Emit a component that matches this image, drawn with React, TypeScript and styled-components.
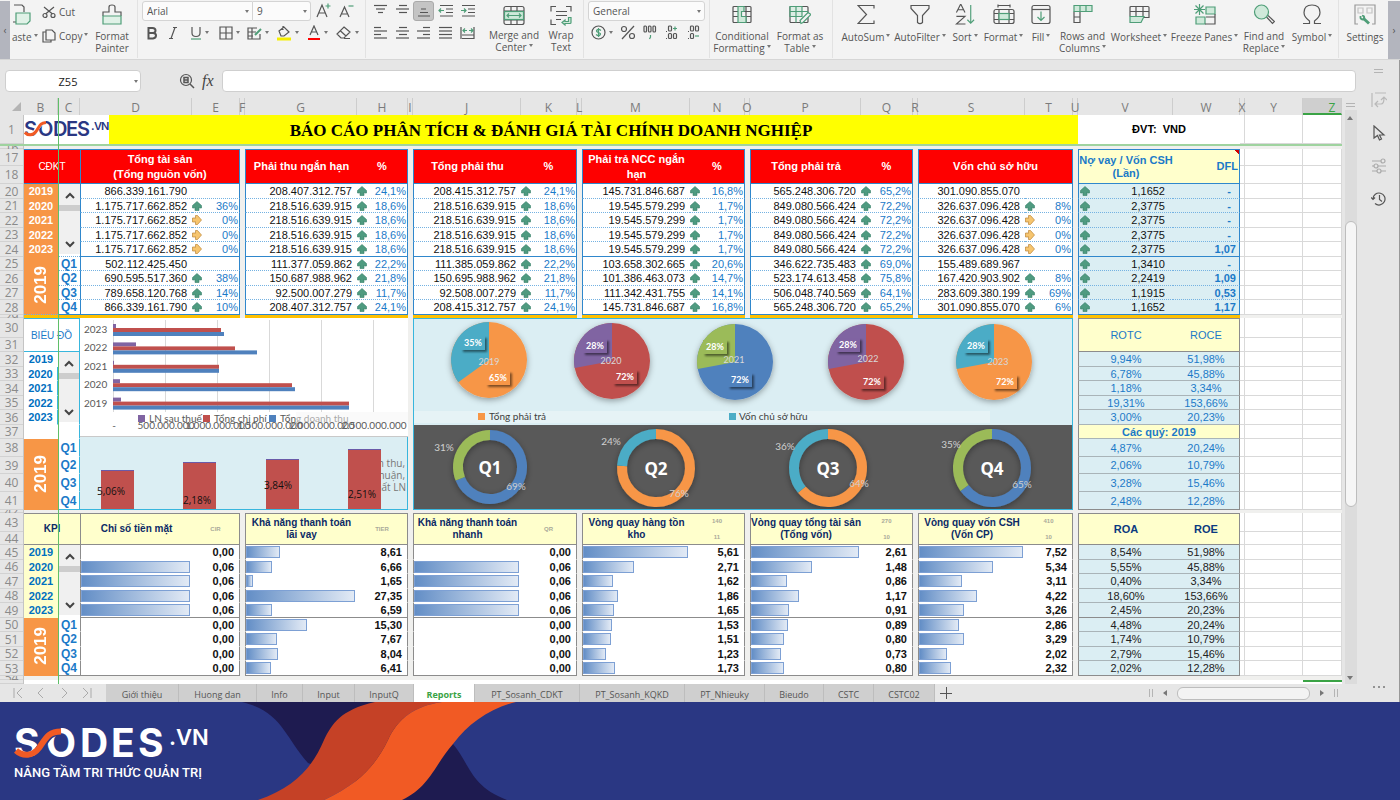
import React from "react";
import styled, { createGlobalStyle, css } from "styled-components";

const Global = createGlobalStyle`
  * { box-sizing: border-box; }
  body { margin: 0; background: #fff; font-family: "Open Sans", "Noto Sans", sans-serif; }
  button, input, select { font-family: inherit; color: inherit; }
  button { padding: 0; border: 0; background: none; }
`;

const ink = "#555";
const green = "#4f9e78";
const blue = "#1b7ac8";
const navy = "#2a3783";
const sheetFont = `"Liberation Sans", Arial, sans-serif`;

/* ---------- Ribbon ---------- */

const Page = styled.div`
  display: flex;
  flex-direction: column;
  min-height: 100vh;
  overflow: hidden;
`;
const Ribbon = styled.header`
  display: flex;
  height: 60px;
  background: #f3f3f3;
  border-bottom: 1px solid #d6d6d6;
  color: ${ink};
  font-size: 10px;
  overflow: hidden;
`;
const EdgeButton = styled.button`
  flex: 0 0 auto;
  width: ${(p: { $w: number }) => p.$w}px;
  height: 58px;
  margin-top: 1px;
  background: #b3b5be;
  font-size: 10px;
`;
const Divider = styled.div`
  flex: 0 0 1px;
  height: 58px;
  background: #e2e2e2;
`;
const Group = styled.div<{ $pad?: string }>`
  display: flex;
  flex: 0 0 auto;
  padding: ${(p) => p.$pad || "0"};
`;
const BigButton = styled.button<{ $w: number; $gap?: number }>`
  flex: 0 0 auto;
  width: ${(p) => p.$w}px;
  display: flex;
  flex-direction: column;
  align-items: center;
  padding-top: 4px;
  font-size: 10px;
  line-height: 12px;
  white-space: nowrap;
  svg { flex: none; height: 21px; margin-bottom: ${(p) => p.$gap ?? 5}px; }
`;
const Caret = styled.i`
  display: inline-block;
  margin: 0 0 5px 2px;
  border: 2px solid transparent;
  border-top: 3px solid #777;
  border-bottom: 0;
  vertical-align: middle;
`;
const Spacer = styled.div`
  flex: 1 1 0;
`;
const PasteButton = styled(BigButton)`
  overflow: hidden;
  align-items: flex-start;
  padding-left: 2px;
`;
const Stack = styled.div<{ $w: number }>`
  flex: 0 0 auto;
  width: ${(p) => p.$w}px;
  display: flex;
  flex-direction: column;
`;
const SmallLabelButton = styled.button`
  display: flex;
  align-items: center;
  gap: 3px;
  height: 24px;
  font-size: 10px;
  white-space: nowrap;
`;
const Line = styled.div<{ $h: number }>`
  display: flex;
  align-items: center;
  height: ${(p) => p.$h}px;
`;
const Field = styled.label<{ $w: number; $left?: boolean; $right?: boolean }>`
  position: relative;
  display: flex;
  align-items: center;
  flex: 0 0 auto;
  width: ${(p) => p.$w}px;
  height: 20px;
  background: #fbfbfb;
  border: 1px solid #d4d4d4;
  border-radius: ${(p) => (p.$left ? "3px 0 0 3px" : p.$right ? "0 3px 3px 0" : "3px")};
  ${(p) => p.$right && "border-left: 0;"}
  select {
    appearance: none;
    flex: 1;
    width: 100%;
    height: 18px;
    padding: 0 4px;
    border: 0;
    background: none;
    font-size: 10px;
  }
  i { position: absolute; right: 3px; top: 8px; margin: 0; }
`;
const IconButton = styled.button<{ $w: number; $on?: boolean }>`
  flex: 0 0 auto;
  width: ${(p) => p.$w}px;
  height: 20px;
  display: flex;
  align-items: center;
  justify-content: center;
  border-radius: 3px;
  ${(p) => p.$on && "background: #c4c4c4; border: 1px solid #aaa;"}
  i { margin: 0 0 0 3px; }
`;

const G = ({ w = 20, h = 20, children, vb }: any) => (
  <svg width={w} height={h} viewBox={vb || `0 0 ${w} ${h}`} fill="none" stroke={ink} strokeWidth="1.2">
    {children}
  </svg>
);
const T = ({ label, caret }: { label: string; caret?: boolean }) => (
  <span>
    {label}
    {caret && <Caret />}
  </span>
);

const icons: Record<string, React.ReactNode> = {
  painter: (
    <G w={20} h={21}>
      <path d="M1 12V8h6V3q0-2 3-2t3 2v5h6v4" />
      <path d="M1 12h18v8H1z" fill="#e0f1e7" stroke={green} />
    </G>
  ),
  paste: (
    <G w={20} h={21}>
      <path d="M2 1h8l2 2v5M1 18h3" />
      <path d="M4 9h14v8l-3 3H4z" fill="#e0f1e7" stroke={green} />
    </G>
  ),
  cut: (
    <G w={14} h={14}>
      <path d="M2 2l8.500 7M12 2L3.500 9" />
      <circle cx="3" cy="10.500" r="2" />
      <circle cx="11" cy="10.500" r="2" />
    </G>
  ),
  copy: (
    <G w={14} h={14}>
      <path d="M3.500 3H1v10h8v-2M4 1h6l3 3v7H4z" />
    </G>
  ),
  merge: (
    <G w={22} h={20}>
      <rect x="1" y="1" width="20" height="18" rx="2" />
      <path d="M1 5.500h20M1 14.500h20M8 1v4.500M14 1v4.500M8 14.500V19M14 14.500V19" />
      <rect x="1.500" y="6" width="19" height="8" fill="#cfe9da" stroke={green} />
      <path d="M4 10h14M6 8l-2 2 2 2M16 8l2 2-2 2" stroke={green} />
    </G>
  ),
  wrap: (
    <G w={22} h={20}>
      <path d="M6 1H1v5M16 1h5v5M6 19H1v-5M6 6h11M6 10h11M6 14h5" />
      <path d="M18.500 12h2.500v5q0 1-1 1h-5v1.500L12 17l3-2.500V16h3.500z" stroke={green} fill="#cfe9da" />
    </G>
  ),
  cond: (
    <G w={20} h={20}>
      <rect x="1" y="2" width="18" height="16" rx="1" />
      <path d="M1 7h18M1 12h18M14 2v16" />
      <path d="M6 2h6v5H9.500v5H14v6H6z" fill="#cfe9da" stroke={green} />
    </G>
  ),
  table: (
    <G w={22} h={20}>
      <rect x="1" y="2" width="18" height="16" rx="1" />
      <path d="M1 2h12v10H1zM1 7h18M7 2v16M13 2v10M1 12h10" fill="#cfe9da" fillOpacity=".6" stroke={green} />
      <path d="M12 19l-1-3 8-8 3 2-8 8z" fill="#f3f3f3" stroke={green} />
    </G>
  ),
  sum: (
    <G w={18} h={20}>
      <path d="M17 4V1H1l8.500 9L1 19h16v-3" />
    </G>
  ),
  filter: (
    <G w={20} h={20}>
      <path d="M1 1h18v3l-6.500 7v7q-2.500 2.500-5 0v-7L1 4z" />
    </G>
  ),
  sort: (
    <G w={20} h={22}>
      <path d="M1 9L5.500 0 10 9M2.500 6h6M1 13h9l-9 8h9.500" />
      <path d="M16 1v19M12.500 16.500L16 20l3.500-3.500" stroke={green} />
    </G>
  ),
  format: (
    <G w={22} h={20}>
      <path d="M5 1h12M5 0v3M17 0v3" />
      <rect x="1" y="5" width="20" height="14" rx="2" />
      <path d="M1 9h20M1 15h20M6 5v14M16 5v14" />
      <rect x="6" y="9" width="10" height="6" fill="#cfe9da" stroke={green} />
    </G>
  ),
  fill: (
    <G w={20} h={20}>
      <rect x="1" y="1" width="18" height="18" rx="2" />
      <path d="M1 5h18" />
      <path d="M10 7v9M6.500 12.500L10 16l3.500-3.500" stroke={green} />
    </G>
  ),
  rows: (
    <G w={20} h={20}>
      <path d="M1 7v11h6V7M1 12.500h6" />
      <path d="M1 1h18v6H1zM7 1v6M13 1v6" fill="#cfe9da" stroke={green} />
    </G>
  ),
  worksheet: (
    <G w={21} h={20}>
      <path d="M1 12V3q0-1 1-1h17q1 0 1 1v10h-5M1 7h19M7 2v10M14 2v10M1 12h13" />
      <path d="M1 12h14l-3 6H1z" fill="#cfe9da" stroke={green} />
    </G>
  ),
  freeze: (
    <G w={22} h={21}>
      <path d="M5.500 0v11M0 5.500h11M1.500 1.500l8 8M9.500 1.500l-8 8" stroke={green} />
      <path d="M12 3h9v7h-9zM2 13v7h9v-7z" fill="#cfe9da" stroke={green} />
      <path d="M12 13h9v7H11M21 10v4" />
    </G>
  ),
  find: (
    <G w={22} h={21}>
      <path d="M13.500 13l6 6.500 2-2-6.500-6" />
      <circle cx="8.500" cy="8" r="7" fill="#cfe9da" stroke={green} />
    </G>
  ),
  symbol: (
    <G w={20} h={21}>
      <path d="M1 19.500h6.500V17Q2 13 2 8.500 2 1 10 1t8 7.500q0 4.500-5.500 8.500v2.500H19" />
    </G>
  ),
  settings: (
    <G w={22} h={21}>
      <path d="M4 20H1V1h20v19h-3" stroke="#999" />
      <path d="M4 4h5v5H4zM13 4h5v5h-5z" stroke="#c4c4c4" />
      <path d="M9 14l6 5.500" stroke={green} strokeWidth="3" />
      <path d="M6.500 12v2q1 2 3 1.500 1.500-2 0-3.500L8 11.500" stroke={green} strokeWidth="1.800" />
    </G>
  ),
};

const hLines = (rows: [number, number][]) => (
  <G w={16} h={14}>
    {rows.map(([x, w], i) => (
      <path key={i} d={`M${x} ${1.5 + i * 3.5}h${w}`} />
    ))}
  </G>
);

const RibbonBar = () => (
  <Ribbon>
    <EdgeButton $w={10} aria-label="Scroll ribbon left">‹</EdgeButton>
    <Group>
      <PasteButton $w={32} $gap={6}>
        {icons.paste}
        <T label="aste" caret />
      </PasteButton>
      <Stack $w={48}>
        <SmallLabelButton>{icons.cut}<T label="Cut" /></SmallLabelButton>
        <SmallLabelButton>{icons.copy}<T label="Copy" caret /></SmallLabelButton>
      </Stack>
      <BigButton $w={44}>
        {icons.painter}
        <T label="Format" /><T label="Painter" />
      </BigButton>
    </Group>
    <Group $pad="0 0 0 3px"><Divider /></Group>
    <Group $pad="1px 0 0 4px">
      <Stack $w={223}>
        <Line $h={20}>
          <Field $w={111} $left>
            <select aria-label="Font"><option>Arial</option></select><Caret />
          </Field>
          <Field $w={58} $right>
            <select aria-label="Font size"><option>9</option></select><Caret />
          </Field>
          <IconButton $w={24} aria-label="Increase font">
            <G w={16} h={16}><path d="M2 14L7 2l5 12M4 10h6" /><path d="M10.500 3h5M13 .5v5" stroke={green} /></G>
          </IconButton>
          <IconButton $w={22} aria-label="Decrease font">
            <G w={16} h={16}><path d="M2 14L6.500 4 11 14M4 11h5" /><path d="M10.500 3h5" stroke={green} /></G>
          </IconButton>
        </Line>
        <Line $h={23}>
          <IconButton $w={20} aria-label="Bold"><G w={12} h={14}><path strokeWidth="2" d="M2.500 2h4q3 0 3 2.500t-3 2.500h-4zM2.500 7h4.500q3 0 3 2.500T7 12.500H2.500z" /></G></IconButton>
          <IconButton $w={22} aria-label="Italic"><G w={10} h={14}><path d="M5 1.500h4M1 12.500h4M7 1.500l-4 11" /></G></IconButton>
          <IconButton $w={30} aria-label="Underline"><G w={12} h={14}><path d="M2 1v6q0 3.500 4 3.500T10 7V1" /><path d="M1 13h10" stroke={green} /></G><Caret /></IconButton>
          <IconButton $w={30} aria-label="Borders"><G w={14} h={14}><path d="M1 1h12v12H1zM7 1v12M1 7h12" /></G><Caret /></IconButton>
          <IconButton $w={28} aria-label="Draw border"><G w={15} h={14}><path d="M13 8v5H1V2h9M1 6h8M1 10h5M5 2v11" /><path d="M14 3L8 9" stroke={green} strokeWidth="2" /></G><Caret /></IconButton>
          <IconButton $w={31} aria-label="Fill color"><G w={16} h={16}><path d="M3 6l5-4 5 5-5 4H5zM7 1v4" /><path d="M1 14h14" stroke="#f5ee00" strokeWidth="3" /></G><Caret /></IconButton>
          <IconButton $w={28} aria-label="Font color"><G w={14} h={16}><path d="M3 10L7 1l4 9M4.500 7h5" /><path d="M1 14h12" stroke="red" strokeWidth="2" /></G><Caret /></IconButton>
          <IconButton $w={32} aria-label="Clear"><G w={16} h={14}><path d="M8 1l6 5-6 6H5L1 8zM4 4.500l6 5.500M8 12.500h6" /></G><Caret /></IconButton>
        </Line>
      </Stack>
    </Group>
    <Divider />
    <Group $pad="1px 0 0 4px">
      <Stack $w={119}>
        <Line $h={20}>
          <IconButton $w={22} aria-label="Top">{hLines([[1, 13], [3, 9], [5, 5]])}</IconButton>
          <IconButton $w={21} aria-label="Middle">{hLines([[4, 8], [1, 13], [4, 8]])}</IconButton>
          <IconButton $w={21} $on aria-label="Bottom"><G w={16} h={14}><path d="M5 5h5M4 8.500h8M2 12h12" /></G></IconButton>
          <IconButton $w={24} aria-label="Decrease indent"><G w={16} h={14}><path d="M2 1.500h13M8 5h7M8 8.500h7M2 12h13" /><path d="M1 6.500h5M3 4.500l-2 2 2 2" stroke={green} /></G></IconButton>
          <IconButton $w={20} aria-label="Increase indent"><G w={16} h={14}><path d="M2 1.500h13M8 5h7M8 8.500h7M2 12h13" /><path d="M1 6.500h5M4 4.500l2 2-2 2" stroke={green} /></G></IconButton>
        </Line>
        <Line $h={23}>
          <IconButton $w={22} aria-label="Left">{hLines([[1, 7], [1, 13], [1, 7], [1, 13]])}</IconButton>
          <IconButton $w={21} aria-label="Center">{hLines([[4, 8], [1, 13], [4, 8], [1, 13]])}</IconButton>
          <IconButton $w={21} aria-label="Right">{hLines([[7, 7], [1, 13], [7, 7], [1, 13]])}</IconButton>
          <IconButton $w={24} aria-label="Justify">{hLines([[1, 13], [1, 13], [1, 13], [1, 13]])}</IconButton>
          <IconButton $w={20} aria-label="Distribute"><G w={16} h={14}><path d="M1 1v12M14 1v12M2 9h12M2 12.500h12" /><path d="M3 4.500h4M9 4.500h4M5 2.500l-2 2 2 2M11 2.500l2 2-2 2" stroke={green} /></G></IconButton>
        </Line>
      </Stack>
      <BigButton $w={50} $gap={3}>{icons.merge}<T label="Merge and" /><T label="Center" caret /></BigButton>
      <BigButton $w={44} $gap={3}>{icons.wrap}<T label="Wrap" /><T label="Text" /></BigButton>
    </Group>
    <Divider />
    <Group $pad="1px 0 0 4px">
      <Stack $w={121}>
        <Line $h={20}>
          <Field $w={117}>
            <select aria-label="Number format"><option>General</option></select><Caret />
          </Field>
        </Line>
        <Line $h={23}>
          <IconButton $w={27} aria-label="Currency"><G w={15} h={15}><circle cx="7.500" cy="7.500" r="6.500" /><path d="M10 5.500Q7.500 3.500 6 5t1.500 2.500T9 10 5 9.500M7.500 3v9" stroke={green} /></G><Caret /></IconButton>
          <IconButton $w={25} aria-label="Percent"><G w={16} h={15}><path d="M14 1L2 14" /><circle cx="4" cy="4" r="2.500" /><circle cx="12" cy="11" r="2.500" /></G></IconButton>
          <IconButton $w={20} aria-label="Thousands"><G w={14} h={15}><rect x="1" y="1" width="2.500" height="6" rx="1" /><rect x="5.500" y="1" width="2.500" height="6" rx="1" /><rect x="10" y="1" width="2.500" height="6" rx="1" /><path d="M7.500 10v2l-1 2" stroke={green} /></G></IconButton>
          <IconButton $w={23} aria-label="Add decimal"><G w={13} h={15}><rect x="3.500" y="1" width="3" height="5" rx="1" /><path d="M1 6.500h1M1 13.500h1" /><rect x="3.500" y="8.500" width="3" height="5" rx="1" /><rect x="8.500" y="8.500" width="3" height="5" rx="1" /><path d="M8 3.500h4M10 1.500v4" stroke={green} /></G></IconButton>
          <IconButton $w={21} aria-label="Remove decimal"><G w={13} h={15}><rect x="3.500" y="1" width="3" height="5" rx="1" /><rect x="8.500" y="1" width="3" height="5" rx="1" /><path d="M1 6.500h1M1 13.500h1" /><rect x="3.500" y="8.500" width="3" height="5" rx="1" /><path d="M8 11h4" stroke={green} /></G></IconButton>
        </Line>
      </Stack>
    </Group>
    <Divider />
    <Group $pad="0 3px">
      <BigButton $w={58}>{icons.cond}<T label="Conditional" /><T label="Formatting" caret /></BigButton>
      <BigButton $w={58}>{icons.table}<T label="Format as" /><T label="Table" caret /></BigButton>
    </Group>
    <Divider />
    <Group $pad="0 4px 0 6px">
      <BigButton $w={54} $gap={6}>{icons.sum}<T label="AutoSum" caret /></BigButton>
      <BigButton $w={54} $gap={6}>{icons.filter}<T label="AutoFilter" caret /></BigButton>
      <BigButton $w={36} $gap={6}>{icons.sort}<T label="Sort" caret /></BigButton>
      <BigButton $w={41} $gap={6}>{icons.format}<T label="Format" caret /></BigButton>
      <BigButton $w={34} $gap={6}>{icons.fill}<T label="Fill" caret /></BigButton>
      <BigButton $w={49}>{icons.rows}<T label="Rows and" /><T label="Columns" caret /></BigButton>
      <BigButton $w={64} $gap={6}>{icons.worksheet}<T label="Worksheet" caret /></BigButton>
      <BigButton $w={67} $gap={6}>{icons.freeze}<T label="Freeze Panes" caret /></BigButton>
      <BigButton $w={52}>{icons.find}<T label="Find and" /><T label="Replace" caret /></BigButton>
      <BigButton $w={44} $gap={6}>{icons.symbol}<T label="Symbol" caret /></BigButton>
    </Group>
    <Divider />
    <Group $pad="0 0 0 5px">
      <BigButton $w={42} $gap={6}>{icons.settings}<T label="Settings" /></BigButton>
    </Group>
    <Spacer />
    <EdgeButton $w={12} aria-label="Scroll ribbon right">›</EdgeButton>
  </Ribbon>
);

/* ---------- Workspace ---------- */

const Workspace = styled.div`
  display: flex;
  background: #e6e6e6;
`;
const Main = styled.main`
  flex: 1 1 0;
  min-width: 0;
`;
const FormulaBar = styled.div`
  display: flex;
  align-items: center;
  height: 38px;
  padding: 4px 2px 0 5px;
`;
const NameBox = styled.label`
  position: relative;
  width: 136px;
  height: 22px;
  input {
    display: block;
    width: 100%;
    height: 22px;
    padding: 0 10px 0 0;
    border: 1px solid #cfcfcf;
    border-radius: 4px;
    text-align: center;
    font-size: 11px;
    color: #222;
  }
  i { position: absolute; right: 3px; top: 10px; margin: 0; }
`;
const FormulaTools = styled.div`
  display: flex;
  align-items: center;
  gap: 7px;
  width: 81px;
  padding-left: 38px;
`;
const FxButton = styled.button`
  font: italic 16px/20px "Liberation Serif", "Noto Sans", serif;
  color: #444;
`;
const FormulaInput = styled.input`
  flex: 1;
  height: 22px;
  border: 1px solid #cfcfcf;
  border-radius: 4px;
`;
const SidePanel = styled.aside`
  flex: 0 0 42px;
  display: flex;
  flex-direction: column;
  align-items: center;
  padding: 9px 0 0;
  gap: 14px;
  border-right: 1px solid #999;
  button { height: 19px; }
  button:last-child { margin-top: auto; }
`;

const SheetRow = styled.div`
  display: flex;
`;
const Sheet = styled.div`
  position: relative;
  flex: 1 1 0;
  min-width: 0;
  background: #f0f0ee;
  font-family: ${sheetFont};
`;
const Band = styled.div<{ $h?: number; $bg?: string }>`
  display: grid;
  grid-template-columns: 24px minmax(0, 1fr);
  ${(p) => p.$h && `height: ${p.$h}px;`}
  background: ${(p) => p.$bg || "none"};
`;
const ColumnHeads = styled.div`
  display: grid;
  grid-template-columns:
    34fr 22fr 112fr 48fr 5px 112fr 51fr 5px 108fr 56fr 5px 108fr 55fr 5px
    111fr 52fr 5px 107fr 48fr 5px 95fr 67fr 5px 58fr 39fr;
`;
const ColumnHead = styled.div<{ $on?: boolean }>`
  display: flex;
  justify-content: center;
  min-width: 0;
  height: 17px;
  padding-top: 2px;
  border-right: 1px solid #cdcdcd;
  font: 12px/15px "Open Sans", "Noto Sans", sans-serif;
  color: #7b7b7b;
  ${(p) => p.$on && "background: #cfcfcf; color: #3aa345; border-bottom: 2px solid #3aa345; padding-left: 20px;"}
`;
const Corner = styled.div`
  display: flex;
  justify-content: flex-end;
  align-items: flex-end;
  padding: 0 3px 4px 0;
`;
const Blocks = styled.div`
  display: grid;
  grid-template-columns:
    56fr 160fr 5px 163fr 5px 164fr 5px 163fr 5px 163fr 5px 155fr 5px 162fr 5px 97fr;
  min-width: 0;
`;
const Block = styled.div<{ $c: string; $bg?: string }>`
  grid-column: ${(p) => p.$c};
  min-width: 0;
  background: ${(p) => p.$bg || "none"};
`;
const RowHeads = styled.div`
  background: #e6e6e6;
  border-right: 1px solid #c4c4c4;
`;
const RowHead = styled.div<{ $h: number }>`
  height: ${(p) => p.$h}px;
  line-height: ${(p) => p.$h}px;
  font-family: "Open Sans", "Noto Sans", sans-serif;
  font-size: 12px;
  text-align: center;
  color: #8a8a8a;
  ${(p) => p.$h < 10 && "overflow: hidden;"}
  box-shadow: inset 0 -1px #d2d2d2;
`;
const Filler = styled.div`
  grid-column: 15 / 17;
  background: #fff;
  display: grid;
  grid-template-columns: 5px 58fr 39fr;
  align-content: start;
`;
const FillCell = styled.div<{ $h: number }>`
  height: ${(p) => p.$h}px;
  border-right: 1px solid #d9d9d9;
  border-bottom: 1px solid #d9d9d9;
`;
const SelectedEdge = styled.div`
  grid-column: 16;
  width: 40%;
  height: 4px;
  margin-left: auto;
  border-top: 2px solid #3aa345;
`;
const FreezeV = styled.div`
  position: absolute;
  top: 0;
  bottom: 0;
  left: calc(24px + (100% - 59px) * 34 / 1283);
  width: 1px;
  background: #5fbf68;
`;
const FreezeH = styled.div`
  height: 2px;
  background: #9fd39f;
`;

const Title = styled.h1`
  position: relative;
  grid-column: 1 / 14;
  height: 29px;
  margin: 0;
  background: #ff0;
  color: #000;
  font: bold 17px/31px "Liberation Serif", "Times New Roman", serif;
  text-align: center;
  svg { position: absolute; left: 0; top: 0; background: #fff; }
`;
const Unit = styled.div`
  grid-column: 14;
  background: #fff;
  font: bold 11px/29px ${sheetFont};
  text-align: center;
  white-space: pre;
`;

const RightFill = ({ rows }: { rows: number[] }) => (
  <Filler>
    {rows.map((h, i) => (
      <React.Fragment key={i}>
        <FillCell $h={h} /><FillCell $h={h} /><FillCell $h={h} />
      </React.Fragment>
    ))}
  </Filler>
);
const Heads = ({ rows }: { rows: [string, number][] }) => (
  <RowHeads>
    {rows.map(([n, h]) => <RowHead key={n} $h={h}>{n}</RowHead>)}
  </RowHeads>
);

/* ---------- Data tables ---------- */

const rowH = (i: number) => (i % 2 ? 14 : 15);

const DataTable = styled.table<{ $line: string; $edge: string }>`
  width: 100%;
  table-layout: fixed;
  border-collapse: separate;
  border-spacing: 0;
  background: #fff;
  font: 11px/12px ${sheetFont};
  color: #111;
  td, th { padding: 0; white-space: nowrap; }
  td { border-bottom: 1px ${(p) => p.$line}; }
  tr.solid td, tr:last-child td { border-bottom: 1px solid ${(p) => p.$edge}; }
  thead th { border-bottom: 1px solid ${(p) => p.$edge}; border-top: 1px solid ${(p) => p.$edge}; }
  td:last-child, th:last-child { border-right: 1px solid ${(p) => p.$edge}; }
  th.first, td.first { border-left: 1px solid ${(p) => p.$edge}; }
`;
const Row = styled.tr<{ $h: number }>`
  height: ${(p) => p.$h}px;
`;
const HeadCell = styled.th<{ $tone: "red" | "cream" | "kpi" | "plain"; $light?: boolean }>`
  line-height: 15px;
  font-size: 11px;
  white-space: pre-line !important;
  ${(p) =>
    p.$tone === "red"
      ? css`background: #fe0000; color: #fff;`
      : p.$tone === "cream"
      ? css`background: #ffffcc; color: #0b2a66; line-height: 13px;`
      : p.$tone === "kpi"
      ? css`background: #ffffcc; color: #0b2a66; font-size: 10px; line-height: 12px; white-space: pre !important;`
      : css`background: #fff; color: ${blue};`}
  ${(p) => p.$light && "font-size: 10px; font-weight: normal;"}
`;
const Num = styled.td<{ $pad?: number }>`
  text-align: right;
  padding-right: ${(p) => p.$pad || 5}px !important;
`;
const Pct = styled.td`
  color: ${blue};
  div { display: flex; justify-content: space-between; align-items: center; padding: 0 1px 0 0; }
  svg { display: block; }
`;
const Year = styled.td<{ $bg: string; $fg: string }>`
  background: ${(p) => p.$bg};
  color: ${(p) => p.$fg};
  font-weight: bold;
  text-align: center;
  border-bottom-color: transparent !important;
`;
const Quarter = styled.td`
  color: ${blue};
  font-size: 12px;
  font-weight: bold;
  text-align: center;
  border-bottom: 1px solid #d9d9d9;
`;
const YearSpan = styled.td`
  background: #f79646;
  color: #fff;
  font-size: 17px;
  font-weight: bold;
  text-align: center;
  span { display: inline-block; writing-mode: vertical-rl; transform: rotate(180deg); line-height: 20px; }
`;
const ScrollCell = styled.td`
  background: #fff;
  vertical-align: top;
  div {
    display: flex;
    flex-direction: column;
    justify-content: space-between;
    align-items: center;
    width: calc(100% - 1px);
    height: 70px;
    margin-left: 1px;
    padding: 7px 0 5px;
    background: linear-gradient(#cdcdcd, #cdcdcd) 0 21px / 100% 6px no-repeat #f0f0f0;
  }
  button { height: 10px; line-height: 0; }
`;

const Up = () => (
  <svg width="10" height="10" viewBox="0 0 10 10"><path d="M5 .5L9.500 4.500V7H7.500L7 6.500V9.500H3V6.500L2.500 7H.5V4.500z" fill="#4f9b80" stroke="#38806a" strokeWidth=".6" /></svg>
);
const Flat = () => (
  <svg width="10" height="10" viewBox="0 0 10 10"><path d="M9.500 5L5.500 9.500H3.500V7.500L4 7H.5V3H4L3.500 2.500V.5H5.500z" fill="#f6c56f" stroke="#bb8536" strokeWidth=".7" /></svg>
);
const Scroller = ({ label }: { label: string }) => (
  <ScrollCell rowSpan={5}>
    <div>
      <button aria-label={`${label} previous`}><svg width="10" height="10" viewBox="0 0 10 10" fill="none" stroke="#444" strokeWidth="2"><path d="M1 7l4-4 4 4" /></svg></button>
      <button aria-label={`${label} next`}><svg width="10" height="10" viewBox="0 0 10 10" fill="none" stroke="#444" strokeWidth="2"><path d="M1 3l4 4 4-4" /></svg></button>
    </div>
  </ScrollCell>
);

const years = ["2019", "2020", "2021", "2022", "2023"];
const quarters = ["Q1", "Q2", "Q3", "Q4"];

type Cell = [string, string];
const mark = (p: string) => (p === "0%" ? <Flat /> : p ? <Up /> : null);
const zip = (v: string, p: string): Cell[] => {
  const ps = p.split("|");
  return v.split("|").map((x, i) => [x, ps[i]]);
};
const assets = zip(
  "866.339.161.790|1.175.717.662.852|1.175.717.662.852|1.175.717.662.852|1.175.717.662.852|502.112.425.450|690.595.517.360|789.658.120.768|866.339.161.790",
  "|36%|0%|0%|0%||38%|14%|10%"
);
const balance: { title: string; pct?: boolean; c: string; w: [number, number]; rows: Cell[] }[] = [
  {
    title: "Phải thu ngắn hạn", pct: true, c: "4", w: [112, 51],
    rows: zip(
      "208.407.312.757|218.516.639.915|218.516.639.915|218.516.639.915|218.516.639.915|111.377.059.862|150.687.988.962|92.500.007.279|208.407.312.757",
      "24,1%|18,6%|18,6%|18,6%|18,6%|22,2%|21,8%|11,7%|24,1%"
    ),
  },
  {
    title: "Tổng phải thu", pct: true, c: "6", w: [108, 56],
    rows: zip(
      "208.415.312.757|218.516.639.915|218.516.639.915|218.516.639.915|218.516.639.915|111.385.059.862|150.695.988.962|92.508.007.279|208.415.312.757",
      "24,1%|18,6%|18,6%|18,6%|18,6%|22,2%|21,8%|11,7%|24,1%"
    ),
  },
  {
    title: "Phải trả NCC ngắn\nhạn", pct: true, c: "8", w: [108, 55],
    rows: zip(
      "145.731.846.687|19.545.579.299|19.545.579.299|19.545.579.299|19.545.579.299|103.658.302.665|101.386.463.073|111.342.431.755|145.731.846.687",
      "16,8%|1,7%|1,7%|1,7%|1,7%|20,6%|14,7%|14,1%|16,8%"
    ),
  },
  {
    title: "Tổng phải trả", pct: true, c: "10", w: [111, 52],
    rows: zip(
      "565.248.306.720|849.080.566.424|849.080.566.424|849.080.566.424|849.080.566.424|346.622.735.483|523.174.613.458|506.048.740.569|565.248.306.720",
      "65,2%|72,2%|72,2%|72,2%|72,2%|69,0%|75,8%|64,1%|65,2%"
    ),
  },
  {
    title: "Vốn chủ sở hữu", c: "12", w: [107, 48],
    rows: zip(
      "301.090.855.070|326.637.096.428|326.637.096.428|326.637.096.428|326.637.096.428|155.489.689.967|167.420.903.902|283.609.380.199|301.090.855.070",
      "|8%|0%|0%|0%||8%|69%|6%"
    ),
  },
];
const leverage = zip(
  "1,1652|2,3775|2,3775|2,3775|2,3775|1,3410|2,2419|1,1915|1,1652",
  "-|-|-|-|1,07|-|1,09|0,53|1,17"
);

const Cols = ({ w }: { w: number[] }) => (
  <colgroup>{w.map((x, i) => <col key={i} width={x} />)}</colgroup>
);
const PctCell = ({ v }: { v: string }) => (
  <Pct>
    <div><span>{mark(v)}</span><span>{v}</span></div>
  </Pct>
);
const blueTable = { $line: "dotted #74b2e2", $edge: "#2f87cc" };
const grayTable = { $line: "solid transparent", $edge: "#8c8c8c" };
const ratioTable = { $line: "solid #a9b4b8", $edge: "#8c8c8c" };

const SideCells = ({ i, bg, fg, label }: { i: number; bg: string; fg: string; label: string }) => (
  <>
    {i < 5 && <Year $bg={bg} $fg={fg}>{years[i]}</Year>}
    {i === 0 && <Scroller label={label} />}
    {i === 5 && <YearSpan rowSpan={4}><span>2019</span></YearSpan>}
    {i >= 5 && <Quarter>{quarters[i - 5]}</Quarter>}
  </>
);

const LeverageTable = styled(DataTable)`
  td { background: #dbeef3; }
  thead th { color: ${blue}; }
  td:first-child svg { display: block; margin-top: 1px; }
`;
const LevCell = styled.div`
  display: flex;
  justify-content: space-between;
  padding: 0 8px 0 1px;
`;
const Dfl = styled(Num)`
  color: ${blue};
  font-weight: bold;
`;
const NoteCell = styled(HeadCell)`
  text-align: right;
  padding-right: 1px !important;
  color: ${blue} !important;
  background: linear-gradient(225deg, #d00000 3px, transparent 3px) #ffffcc;
`;

const r9: number[] = Array.from({ length: 9 }, (_, i) => rowH(i));

const BalanceSection = () => (
  <Band>
    <Heads rows={[["17", 17], ["18", 18], ...r9.map((h, i): [string, number] => [String(20 + i), h])]} />
    <Blocks>
      <Block $c="1 / 3">
        <DataTable {...blueTable}>
          <Cols w={[34, 22, 112, 48]} />
          <thead>
            <Row $h={35}>
              <HeadCell $tone="red" $light colSpan={2}>CĐKT</HeadCell>
              <HeadCell $tone="red" className="first" colSpan={2}>{"Tổng tài sản\n(Tổng nguồn vốn)"}</HeadCell>
            </Row>
          </thead>
          <tbody>
            {assets.map(([v, p], i) => (
              <Row key={i} $h={rowH(i)} className={i === 4 ? "solid" : ""}>
                <SideCells i={i} bg="#f79646" fg="#fff" label="Balance" />
                <Num className="first">{v}</Num>
                <PctCell v={p} />
              </Row>
            ))}
          </tbody>
        </DataTable>
      </Block>
      {balance.map((b) => (
        <Block key={b.c} $c={b.c}>
          <DataTable {...blueTable}>
            <Cols w={b.w} />
            <thead>
              <Row $h={35}>
                <HeadCell $tone="red" className="first" colSpan={b.pct ? 1 : 2}>{b.title}</HeadCell>
                {b.pct && <HeadCell $tone="red">%</HeadCell>}
              </Row>
            </thead>
            <tbody>
              {b.rows.map(([v, p], i) => (
                <Row key={i} $h={rowH(i)} className={i === 4 ? "solid" : ""}>
                  <Num className="first">{v}</Num>
                  <PctCell v={p} />
                </Row>
              ))}
            </tbody>
          </DataTable>
        </Block>
      ))}
      <Block $c="14">
        <LeverageTable {...blueTable}>
          <Cols w={[95, 67]} />
          <thead>
            <Row $h={35}>
              <HeadCell $tone="cream" className="first">{"Nợ vay / Vốn CSH\n(Lần)"}</HeadCell>
              <NoteCell $tone="cream">DFL</NoteCell>
            </Row>
          </thead>
          <tbody>
            {leverage.map(([v, d], i) => (
              <Row key={i} $h={rowH(i)} className={i === 4 ? "solid" : ""}>
                <td className="first"><LevCell><Up />{v}</LevCell></td>
                <Dfl $pad={d === "-" ? 8 : 3}>{d}</Dfl>
              </Row>
            ))}
          </tbody>
        </LeverageTable>
      </Block>
      <RightFill rows={[17, 18, ...r9]} />
    </Blocks>
  </Band>
);

/* ---------- Charts ---------- */

const ChartSvg = styled.svg`
  display: block;
  width: 100%;
  font-family: Lato, "Noto Sans", sans-serif;
`;
const hbars: [string, number, number, number][] = [
  ["2023", 3, 108, 111],
  ["2022", 23, 122, 144],
  ["2021", 1, 106, 106],
  ["2020", 7, 179, 182],
  ["2019", 8, 236, 236],
];
const axis = ["-", "500.000.000", "1.000.000.000", "1.500.000.000", "2.000.000.000", "2.500.000.000"];

const RevenueChart = () => (
  <ChartSvg viewBox="0 0 328 119" height="119">
    <rect width="328" height="119" fill="#fff" />
    {axis.map((_, i) => <path key={i} d={`M${33.5 + i * 52} 2v92`} stroke="#d9d9d9" />)}
    {hbars.map(([y, a, b, c], i) => {
      const t = 6 + i * 18.4;
      return (
        <g key={y}>
          <text x="4" y={t + 9} fontSize="10" fill="#595959">{y}</text>
          <rect x="33" y={t} width={a} height="4" fill="#8064a2" />
          <rect x="33" y={t + 4} width={b} height="4" fill="#c0504d" />
          <rect x="33" y={t + 8} width={c} height="4" fill="#4f81bd" />
        </g>
      );
    })}
    <g fontSize="10" fill="#595959">
      <rect x="58" y="97" width="7" height="7" fill="#8064a2" /><text x="69" y="104">LN sau thuế</text>
      <rect x="123" y="97" width="7" height="7" fill="#c0504d" /><text x="134" y="104">Tổng chi phí</text>
      <rect x="189" y="97" width="7" height="7" fill="#4f81bd" /><text x="200" y="104">Tổng doanh thu</text>
      <rect x="216" y="94" width="112" height="12" fill="#f6f6f6" opacity=".5" />
      {axis.map((t, i) => <text key={t} x={34 + i * 52} y="111" textAnchor="middle">{t}</text>)}
    </g>
    <path d="M0 118.500h328" stroke="#c9c9c9" />
  </ChartSvg>
);

const columns: [number, number, string, number, number][] = [
  [21, 33, "5,06%", 17, 58],
  [103, 25, "2,18%", 103, 67],
  [186, 22, "3,84%", 184, 52],
  [268, 12, "2,51%", 268, 61],
];
const MarginChart = () => (
  <ChartSvg viewBox="0 0 328 73" height="73">
    <rect width="328" height="73" fill="#dbeef3" />
    <g fontSize="10" fill="#777" fontFamily="Open Sans, Noto Sans, sans-serif" textAnchor="end">
      <text x="325" y="30">h thu,</text>
      <text x="325" y="42">huận,</text>
      <text x="326" y="54">hất LN</text>
    </g>
    {columns.map(([x, y, label, tx, ty]) => (
      <g key={x}>
        <rect x={x} y={y} width="33" height={73 - y} fill="#c0504d" />
        <rect x={x} y={y} width="33" height="1" fill="#6a5aa8" />
        <text x={tx} y={ty} fontSize="10" fill="#111" fontFamily="Open Sans, Noto Sans, sans-serif">{label}</text>
      </g>
    ))}
    <path d="M0 72.500h328M327.500 0v73" stroke="#38b6dd" />
  </ChartSvg>
);

const arc = (cx: number, cy: number, r: number, a: number, b: number) => {
  const pt = (f: number) => [cx + r * Math.sin(f * 2 * Math.PI), cy - r * Math.cos(f * 2 * Math.PI)];
  const [x1, y1] = pt(a);
  const [x2, y2] = pt(b);
  return `M${x1} ${y1}A${r} ${r} 0 ${b - a > 0.5 ? 1 : 0} 1 ${x2} ${y2}`;
};
type Pie = { y: string; cx: number; cy: number; big: number; a: string; b: string; l1: [number, number]; l2: [number, number]; t: [number, number] };
const pies: Pie[] = [
  { y: "2019", cx: 76, cy: 42, big: 65, a: "#f79646", b: "#4bacc6", l1: [60, 25], l2: [85, 60], t: [76, 44] },
  { y: "2020", cx: 199, cy: 43, big: 72, a: "#c0504d", b: "#8064a2", l1: [182, 28], l2: [212, 59], t: [198, 43] },
  { y: "2021", cx: 322, cy: 44, big: 72, a: "#4f81bd", b: "#9bbb59", l1: [302, 29], l2: [327, 62], t: [321, 42] },
  { y: "2022", cx: 453, cy: 44, big: 72, a: "#c0504d", b: "#8064a2", l1: [435, 27], l2: [459, 64], t: [455, 41] },
  { y: "2023", cx: 581, cy: 44, big: 72, a: "#f79646", b: "#4bacc6", l1: [563, 28], l2: [592, 64], t: [585, 44] },
];
const donuts: { q: string; cx: number; cy: number; r: number; big: number; a: string; b: string; l1: [number, number]; l2: [number, number] }[] = [
  { q: "Q1", cx: 77, cy: 149, r: 37, big: 69, a: "#4f81bd", b: "#9bbb59", l1: [31, 129], l2: [103, 168] },
  { q: "Q2", cx: 243, cy: 150, r: 39, big: 76, a: "#f79646", b: "#4bacc6", l1: [198, 123], l2: [266, 175] },
  { q: "Q3", cx: 415, cy: 150, r: 39, big: 64, a: "#f79646", b: "#4bacc6", l1: [372, 128], l2: [446, 165] },
  { q: "Q4", cx: 579, cy: 150, r: 39, big: 65, a: "#4f81bd", b: "#9bbb59", l1: [538, 126], l2: [609, 166] },
];

const PieBoard = () => (
  <ChartSvg viewBox="0 0 660 192" height="192" textAnchor="middle">
    <defs>
      <filter id="soft" x="-30%" y="-30%" width="160%" height="160%">
        <feDropShadow dx="0" dy="2" stdDeviation="3" floodColor="#000" floodOpacity=".35" />
      </filter>
      <filter id="tag" x="-30%" y="-30%" width="170%" height="190%">
        <feDropShadow dx="2" dy="2" stdDeviation="1" floodColor="#000" floodOpacity=".5" />
      </filter>
    </defs>
    <rect width="660" height="107" fill="#dbeef3" />
    <rect y="93" width="577" height="12" fill="#e6f3f6" />
    <rect y="107" width="660" height="85" fill="#595959" />
    {pies.map((p) => (
      <g key={p.y}>
        <circle cx={p.cx} cy={p.cy} r="38" fill={p.a} filter="url(#soft)" />
        <path d={`${arc(p.cx, p.cy, 38, p.big / 100, 1)}L${p.cx} ${p.cy}Z`} fill={p.b} />
        <rect x={p.l1[0] - 12} y={p.l1[1] - 7} width="24" height="14" fill={p.b} filter="url(#tag)" />
        <rect x={p.l2[0] - 12} y={p.l2[1] - 7} width="24" height="14" fill={p.a} filter="url(#tag)" />
        <g fontSize="9" fontWeight="bold" fill="#fff">
          <text x={p.l1[0]} y={p.l1[1] + 3}>{100 - p.big}%</text>
          <text x={p.l2[0]} y={p.l2[1] + 3}>{p.big}%</text>
        </g>
        <text x={p.t[0]} y={p.t[1] + 3} fontSize="9" fill="#d9d9d9">{p.y}</text>
      </g>
    ))}
    <g fontSize="10" fill="#404040" textAnchor="start">
      <rect x="65" y="95" width="7" height="7" fill="#f79646" /><text x="76" y="102">Tổng phải trả</text>
      <rect x="316" y="95" width="7" height="7" fill="#4bacc6" /><text x="326" y="102">Vốn chủ sở hữu</text>
    </g>
    {donuts.map((d) => (
      <g key={d.q}>
        <g fill="none" strokeWidth="10" filter="url(#soft)">
          <path d={arc(d.cx, d.cy, d.r - 5, 0, d.big / 100)} stroke={d.a} />
          <path d={arc(d.cx, d.cy, d.r - 5, d.big / 100, 0.9999)} stroke={d.b} />
        </g>
        <text x={d.cx} y={d.cy + 7} fontSize="17" fontWeight="bold" fill="#fff" fontFamily="Noto Sans, sans-serif">{d.q}</text>
        <g fontSize="10" fill="#d0d0d0">
          <text x={d.l1[0]} y={d.l1[1] + 4}>{100 - d.big}%</text>
          <text x={d.l2[0]} y={d.l2[1] + 4}>{d.big}%</text>
        </g>
      </g>
    ))}
    <rect x=".5" y=".5" width="659" height="191" fill="none" stroke="#38b6dd" />
  </ChartSvg>
);

const RatioTable = styled(DataTable)`
  color: ${blue};
  text-align: center;
  td { background: #dbeef3; }
  thead th { color: ${blue}; font-weight: normal; }
  td[colspan] { background: #ffffcc; font-weight: bold; }
`;
const DarkRatioTable = styled(RatioTable)`
  color: #222;
  thead th { font-weight: bold; color: #0b3a80; }
`;
const rotc: Cell[] = zip("9,94%|6,78%|1,18%|19,31%|3,00%", "51,98%|45,88%|3,34%|153,66%|20,23%");
const rotcQ: Cell[] = zip("4,87%|2,06%|3,28%|2,48%", "20,24%|10,79%|15,46%|12,28%");
const qH = [18, 17, 18, 18];

const ChartSection = () => {
  const rows: [string, number][] = [["30", 20], ["31", 14], ["32", 15], ["33", 14], ["34", 15], ["35", 14], ["36", 15], ["37", 14], ["38", 18], ["39", 17], ["40", 18], ["41", 18]];
  return (
    <Band>
      <Heads rows={rows} />
      <Blocks>
        <Block $c="1">
          <DataTable $line="solid transparent" $edge="#38b6dd">
            <Cols w={[34, 22]} />
            <thead><Row $h={34}><HeadCell $tone="plain" $light colSpan={2}>BIỂU ĐỒ</HeadCell></Row></thead>
            <tbody>
              {years.map((y, i) => (
                <Row key={y} $h={rowH(i)}>
                  <Year $bg="#fff" $fg="#0070c0">{y}</Year>
                  {i === 0 && <Scroller label="Chart" />}
                </Row>
              ))}
              <Row $h={14}><td /><td /></Row>
              {quarters.map((q, i) => (
                <Row key={q} $h={qH[i]}>
                  {i === 0 && <YearSpan rowSpan={4}><span>2019</span></YearSpan>}
                  <Quarter>{q}</Quarter>
                </Row>
              ))}
            </tbody>
          </DataTable>
        </Block>
        <Block $c="2 / 5"><RevenueChart /><MarginChart /></Block>
        <Block $c="6 / 13"><PieBoard /></Block>
        <Block $c="14">
          <RatioTable {...ratioTable}>
            <Cols w={[95, 67]} />
            <thead><Row $h={34}><HeadCell $tone="cream" className="first">ROTC</HeadCell><HeadCell $tone="cream">ROCE</HeadCell></Row></thead>
            <tbody>
              {rotc.map(([a, b], i) => <Row key={a} $h={rowH(i)}><td className="first">{a}</td><td>{b}</td></Row>)}
              <Row $h={14}><td className="first" colSpan={2}>Các quý: 2019</td></Row>
              {rotcQ.map(([a, b], i) => <Row key={a} $h={qH[i]}><td className="first">{a}</td><td>{b}</td></Row>)}
            </tbody>
          </RatioTable>
        </Block>
        <RightFill rows={rows.map((r) => r[1])} />
      </Blocks>
    </Band>
  );
};

/* ---------- KPI section ---------- */

const Bar = styled.div`
  height: 12px;
  border: 1px solid #7da0d4;
  background: linear-gradient(90deg, #638ec6, #e2eaf5);
`;
const KpiValue = styled(Num)`
  font-weight: bold;
`;
const Code = styled.div`
  display: flex;
  flex-direction: column;
  gap: 4px;
  font: bold 6px/12px ${sheetFont};
  color: #a9a99a;
`;

const kpis: { title: string; code: string[]; c: string; w: [number, number]; max: number; v: string }[] = [
  { title: "Khả năng thanh toán\nlãi vay", code: ["TIER"], c: "4", w: [112, 51], max: 27.35, v: "8,61|6,66|1,65|27,35|6,59|15,30|7,67|8,04|6,41" },
  { title: "Khả năng thanh toán\nnhanh", code: ["QR"], c: "6", w: [108, 56], max: 0.06, v: "0,00|0,06|0,06|0,06|0,06|0,00|0,00|0,00|0,00" },
  { title: "Vòng quay hàng tồn\nkho", code: ["140", "11"], c: "8", w: [108, 55], max: 5.61, v: "5,61|2,71|1,62|1,86|1,65|1,53|1,51|1,23|1,73" },
  { title: "Vòng quay tổng tài sản\n(Tổng vốn)", code: ["270", "10"], c: "10", w: [111, 52], max: 2.61, v: "2,61|1,48|0,86|1,17|0,91|0,89|0,80|0,73|0,80" },
  { title: "Vòng quay vốn CSH\n(Vốn CP)", code: ["410", "10"], c: "12", w: [107, 48], max: 7.52, v: "7,52|5,34|3,11|4,22|3,26|2,86|3,29|2,02|2,32" },
];
const cash = "0,00|0,06|0,06|0,06|0,06|0,00|0,00|0,00|0,00".split("|");
const roa = zip("8,54%|5,55%|0,40%|18,60%|2,45%|4,48%|1,74%|2,79%|2,02%", "51,98%|45,88%|3,34%|153,66%|20,23%|20,24%|10,79%|15,46%|12,28%");

const KpiCells = ({ v, max }: { v: string; max: number }) => {
  const n = parseFloat(v.replace(",", "."));
  return (
    <>
      <td className="first">{n > 0 && <Bar style={{ width: `${(n / max) * 98}%` }} />}</td>
      <KpiValue>{v}</KpiValue>
    </>
  );
};

const KpiSection = () => (
  <Band>
    <Heads rows={[["43", 19], ["44", 13], ...r9.map((h, i): [string, number] => [String(45 + i), h])]} />
    <Blocks>
      <Block $c="1 / 3">
        <DataTable {...grayTable}>
          <Cols w={[34, 22, 112, 48]} />
          <thead>
            <Row $h={32}>
              <HeadCell $tone="kpi" colSpan={2}>KPI</HeadCell>
              <HeadCell $tone="kpi" className="first">Chỉ số tiền mặt</HeadCell>
              <HeadCell $tone="kpi"><Code><span>CIR</span></Code></HeadCell>
            </Row>
          </thead>
          <tbody>
            {cash.map((v, i) => (
              <Row key={i} $h={rowH(i)} className={i === 4 ? "solid" : ""}>
                <SideCells i={i} bg="#ffffcc" fg="#0070c0" label="KPI" />
                <KpiCells v={v} max={0.06} />
              </Row>
            ))}
          </tbody>
        </DataTable>
      </Block>
      {kpis.map((k) => (
        <Block key={k.c} $c={k.c}>
          <DataTable {...grayTable}>
            <Cols w={k.w} />
            <thead>
              <Row $h={32}>
                <HeadCell $tone="kpi" className="first">{k.title}</HeadCell>
                <HeadCell $tone="kpi"><Code>{k.code.map((c) => <span key={c}>{c}</span>)}</Code></HeadCell>
              </Row>
            </thead>
            <tbody>
              {k.v.split("|").map((v, i) => (
                <Row key={i} $h={rowH(i)} className={i === 4 ? "solid" : ""}><KpiCells v={v} max={k.max} /></Row>
              ))}
            </tbody>
          </DataTable>
        </Block>
      ))}
      <Block $c="14">
        <DarkRatioTable {...ratioTable}>
          <Cols w={[95, 67]} />
          <thead><Row $h={32}><HeadCell $tone="cream" className="first">ROA</HeadCell><HeadCell $tone="cream">ROE</HeadCell></Row></thead>
          <tbody>
            {roa.map(([a, b], i) => (
              <Row key={i} $h={rowH(i)} className={i === 4 ? "solid" : ""}><td className="first">{a}</td><td>{b}</td></Row>
            ))}
          </tbody>
        </DarkRatioTable>
      </Block>
      <RightFill rows={[19, 13, ...r9]} />
    </Blocks>
  </Band>
);

/* ---------- Sheet frame ---------- */

const letters = "B C D E F G H I J K L M N O P Q R S T U V W X Y Z".split(" ");
const blockCols = ["1 / 3", "4", "6", "8", "10", "12", "14"];

const VScroll = styled.div`
  flex: 0 0 16px;
  display: flex;
  flex-direction: column;
  align-items: center;
  padding-top: 5px;
  background: linear-gradient(90deg, transparent 3px, #dcdcdc 3px, #dcdcdc 15px, transparent 15px) 0 12px no-repeat;
  button { height: 12px; line-height: 0; }
`;
const Grip = styled.div`
  width: 9px;
  height: 4px;
  margin-bottom: 5px;
  border: solid #b4b4b4;
  border-width: 1px 0;
`;
const Track = styled.div<{ $grow: number }>`
  flex: ${(p) => p.$grow} 1 0;
`;
const Thumb = styled.div<{ $grow: number }>`
  flex: ${(p) => p.$grow} 1 0;
  width: 12px;
  margin-left: 2px;
  background: #f6f6f6;
  border: 1px solid #bdbdbd;
  border-radius: 6px;
`;
const Arrow = ({ d }: { d: string }) => (
  <svg width="8" height="8" viewBox="0 0 8 8"><path d={d} fill="#777" /></svg>
);

/* Brand mark: letter text with the orange ribbon that joins S and O. */
const Brand = ({ small }: { small?: boolean }) =>
  small ? (
    <svg width="85" height="29" viewBox="0 0 85 29" fontFamily="Inter, sans-serif" fontWeight="600" fill={navy}>
      <text y="21" x="0 14 29 42 53" fontSize="20">SODES</text>
      <text y="15" x="67 70 77" fontSize="11">.VN</text>
      <path d="M10 18C15 12 15 8 22 7.500" fill="none" stroke="#fff" strokeWidth="4" />
      <path d="M1 17.500C4 21 9 20.500 12 16.500C16 10.500 16 8 22 7.500" fill="none" stroke="#f15a24" strokeWidth="3" />
    </svg>
  ) : (
    <svg width="200" height="40" viewBox="0 0 200 40" fontFamily="Inter, sans-serif" fontWeight="700" fill="#fff" stroke="none">
      <text y="34" x="0 32 66 97 124" fontSize="39">SODES</text>
      <text y="22" x="155 162 178" fontSize="22" fontWeight="600">.VN</text>
      <path d="M24 28C32 18 33 9 47 8" fill="none" stroke={navy} strokeWidth="8" />
      <path d="M2 27.500C9 34 19 33 25 25C32 15 34 8.500 47 8.500" fill="none" stroke="#f15a24" strokeWidth="6" />
    </svg>
  );

const TabBar = styled.div`
  display: flex;
  height: 18px;
  background: #e6e6e6;
`;
const TabNav = styled.div`
  display: flex;
  width: 106px;
  padding-left: 6px;
  button { width: 23px; height: 18px; display: flex; justify-content: center; align-items: center; }
`;
const Tab = styled.button<{ $w: number; $on?: boolean }>`
  width: ${(p) => p.$w}px;
  padding-top: 3px;
  border-right: 1px solid #bdbdbd;
  background: #cfcfcf;
  color: ${ink};
  font-size: 9px;
  line-height: 14px;
  ${(p) => p.$on && "background: #fff; color: #3aa345; font-weight: bold;"}
`;
const AddTab = styled.button`
  width: 22px;
  line-height: 0;
`;
const HScroll = styled.div`
  display: flex;
  align-items: center;
  gap: 8px;
  width: 209px;
  margin-left: auto;
  padding-right: 20px;
  div.thumb { flex: 1; height: 13px; border: 1px solid #bdbdbd; border-radius: 6px; background: #f3f3f3; }
  i { width: 4px; height: 8px; border: solid #b4b4b4; border-width: 0 1px; }
  button { line-height: 0; }
`;
const tabs: [string, number][] = [
  ["Giới thiệu", 73], ["Huong dan", 78], ["Info", 46], ["Input", 52], ["InputQ", 59], ["Reports", 61],
  ["PT_Sosanh_CDKT", 105], ["PT_Sosanh_KQKD", 105], ["PT_Nhieuky", 80], ["Bieudo", 59], ["CSTC", 50], ["CSTC02", 61],
];
const navPaths = ["M3 2v10M11 2L6 7l5 5", "M9 2L4 7l5 5", "M5 2l5 5-5 5", "M3 2l5 5-5 5M11 2v10"];

const Banner = styled.footer`
  position: relative;
  flex: 1 0 98px;
  background: ${navy};
  overflow: hidden;
`;
const Waves = styled.svg`
  position: absolute;
  left: 0;
  top: 0;
`;
const BannerText = styled.div`
  position: relative;
  padding: 21px 0 0 14px;
  svg { display: block; }
  p { margin: 3px 0 0; color: #fff; font: 500 13px/14px Roboto, "Noto Sans", sans-serif; }
`;

export default function App() {
  return (
    <Page>
      <Global />
      <RibbonBar />
      <Workspace>
        <Main>
          <FormulaBar>
            <NameBox><input aria-label="Name box" defaultValue="Z55" /><Caret /></NameBox>
            <FormulaTools>
              <G w={16} h={16}><circle cx="7" cy="7" r="5.500" /><path d="M5 4.500h4v5H5zM5 7h4M11 11l4 4" strokeWidth="1.500" /></G>
              <FxButton>fx</FxButton>
            </FormulaTools>
            <FormulaInput aria-label="Formula" />
          </FormulaBar>
          <SheetRow>
            <Sheet>
              <Band $h={17} $bg="#e6e6e6">
                <Corner><svg width="9" height="9"><path d="M9 0V9H0z" fill="#b4b4b4" /></svg></Corner>
                <ColumnHeads>{letters.map((l) => <ColumnHead key={l} $on={l === "Z"}>{l}</ColumnHead>)}</ColumnHeads>
              </Band>
              <Band>
                <Heads rows={[["1", 29]]} />
                <Blocks>
                  <Title><Brand small />BÁO CÁO PHÂN TÍCH &amp; ĐÁNH GIÁ TÀI CHÍNH DOANH NGHIỆP</Title>
                  <Unit>ĐVT:  VND</Unit>
                  <RightFill rows={[29]} />
                </Blocks>
              </Band>
              <FreezeH />
              <Band><Heads rows={[["16", 3]]} /></Band>
              <BalanceSection />
              <Band>
                <Heads rows={[["29", 3]]} />
                <Blocks>{blockCols.map((c) => <Block key={c} $c={c} $bg="#ffc000" />)}</Blocks>
              </Band>
              <ChartSection />
              <Band><Heads rows={[["42", 3]]} /></Band>
              <KpiSection />
              <Band><Heads rows={[["54", 4]]} /></Band>
              <Band $bg="#fff"><Heads rows={[["", 4]]} /><Blocks><SelectedEdge /></Blocks></Band>
              <FreezeV />
            </Sheet>
            <VScroll>
              <Grip />
              <button aria-label="Scroll up"><Arrow d="M1 6l3-4 3 4z" /></button>
              <Track $grow={97} />
              <Thumb $grow={283} />
              <Track $grow={164} />
              <button aria-label="Scroll down"><Arrow d="M1 2l3 4 3-4z" /></button>
            </VScroll>
          </SheetRow>
          <TabBar>
            <TabNav>
              {navPaths.map((d) => (
                <button key={d} aria-label="Sheet navigation"><svg width="14" height="14" fill="none" stroke="#aaa"><path d={d} /></svg></button>
              ))}
            </TabNav>
            {tabs.map(([t, w]) => <Tab key={t} $w={w} $on={t === "Reports"}>{t}</Tab>)}
            <AddTab aria-label="Add sheet"><svg width="14" height="14" stroke="#555"><path d="M7.500 1v12M1 7.500h12" /></svg></AddTab>
            <HScroll>
              <i />
              <button aria-label="Scroll left"><Arrow d="M6 1L2 4l4 3z" /></button>
              <div className="thumb" />
              <button aria-label="Scroll right"><Arrow d="M2 1l4 3-4 3z" /></button>
              <i />
            </HScroll>
          </TabBar>
        </Main>
        <SidePanel>
          <Grip />
          <button aria-label="Convert"><G w={16} h={16}><path d="M1 1v14M4 1h11M5 12h5q3 0 3-6M7 9l-3 3 3 3M10 8l3-3 3 3" stroke="#b9b9b9" /></G></button>
          <button aria-label="Select"><G w={16} h={16}><path d="M3 1l10 9H8.500l2 4-2 1-2-4.500L3 13z" /></G></button>
          <button aria-label="Properties"><G w={16} h={16}><path d="M1 3h9M1 8h2M7 8h8M1 13h5M10 13h5" stroke="#aaa" /><circle cx="12" cy="3" r="2" stroke="#aaa" /><circle cx="5" cy="8" r="2" stroke="#aaa" /><circle cx="8" cy="13" r="2" stroke="#aaa" /></G></button>
          <button aria-label="History"><G w={16} h={16}><path d="M2 8a6 6 0 1 1 2 4.500M0 6.500l2 2 2-2M8.500 4v4.500l2.500 2" /></G></button>
          <button aria-label="More"><svg width="14" height="16" fill="#777"><circle cx="2" cy="4" r="1" /><circle cx="7" cy="4" r="1" /><circle cx="12" cy="4" r="1" /></svg></button>
        </SidePanel>
      </Workspace>
      <Banner>
        <Waves width="520" height="98" viewBox="0 0 520 98">
          <path d="M242 0C282 10 284 34 308 61L402 98H507C470 84 470 62 453 42L375 0Z" fill="#1e1b50" />
          <path d="M375 0C340 8 332 22 324 38C312 66 295 85 258 98H324C362 80 376 62 388 38C398 16 415 4 442 0Z" fill="#c54126" />
          <path d="M442 0C415 4 398 16 388 38C376 62 362 80 324 98H402C430 85 435 62 453 42C468 22 490 6 516 0Z" fill="#f15a24" />
        </Waves>
        <BannerText>
          <Brand />
          <p>NÂNG TẦM TRI THỨC QUẢN TRỊ</p>
        </BannerText>
      </Banner>
    </Page>
  );
}
